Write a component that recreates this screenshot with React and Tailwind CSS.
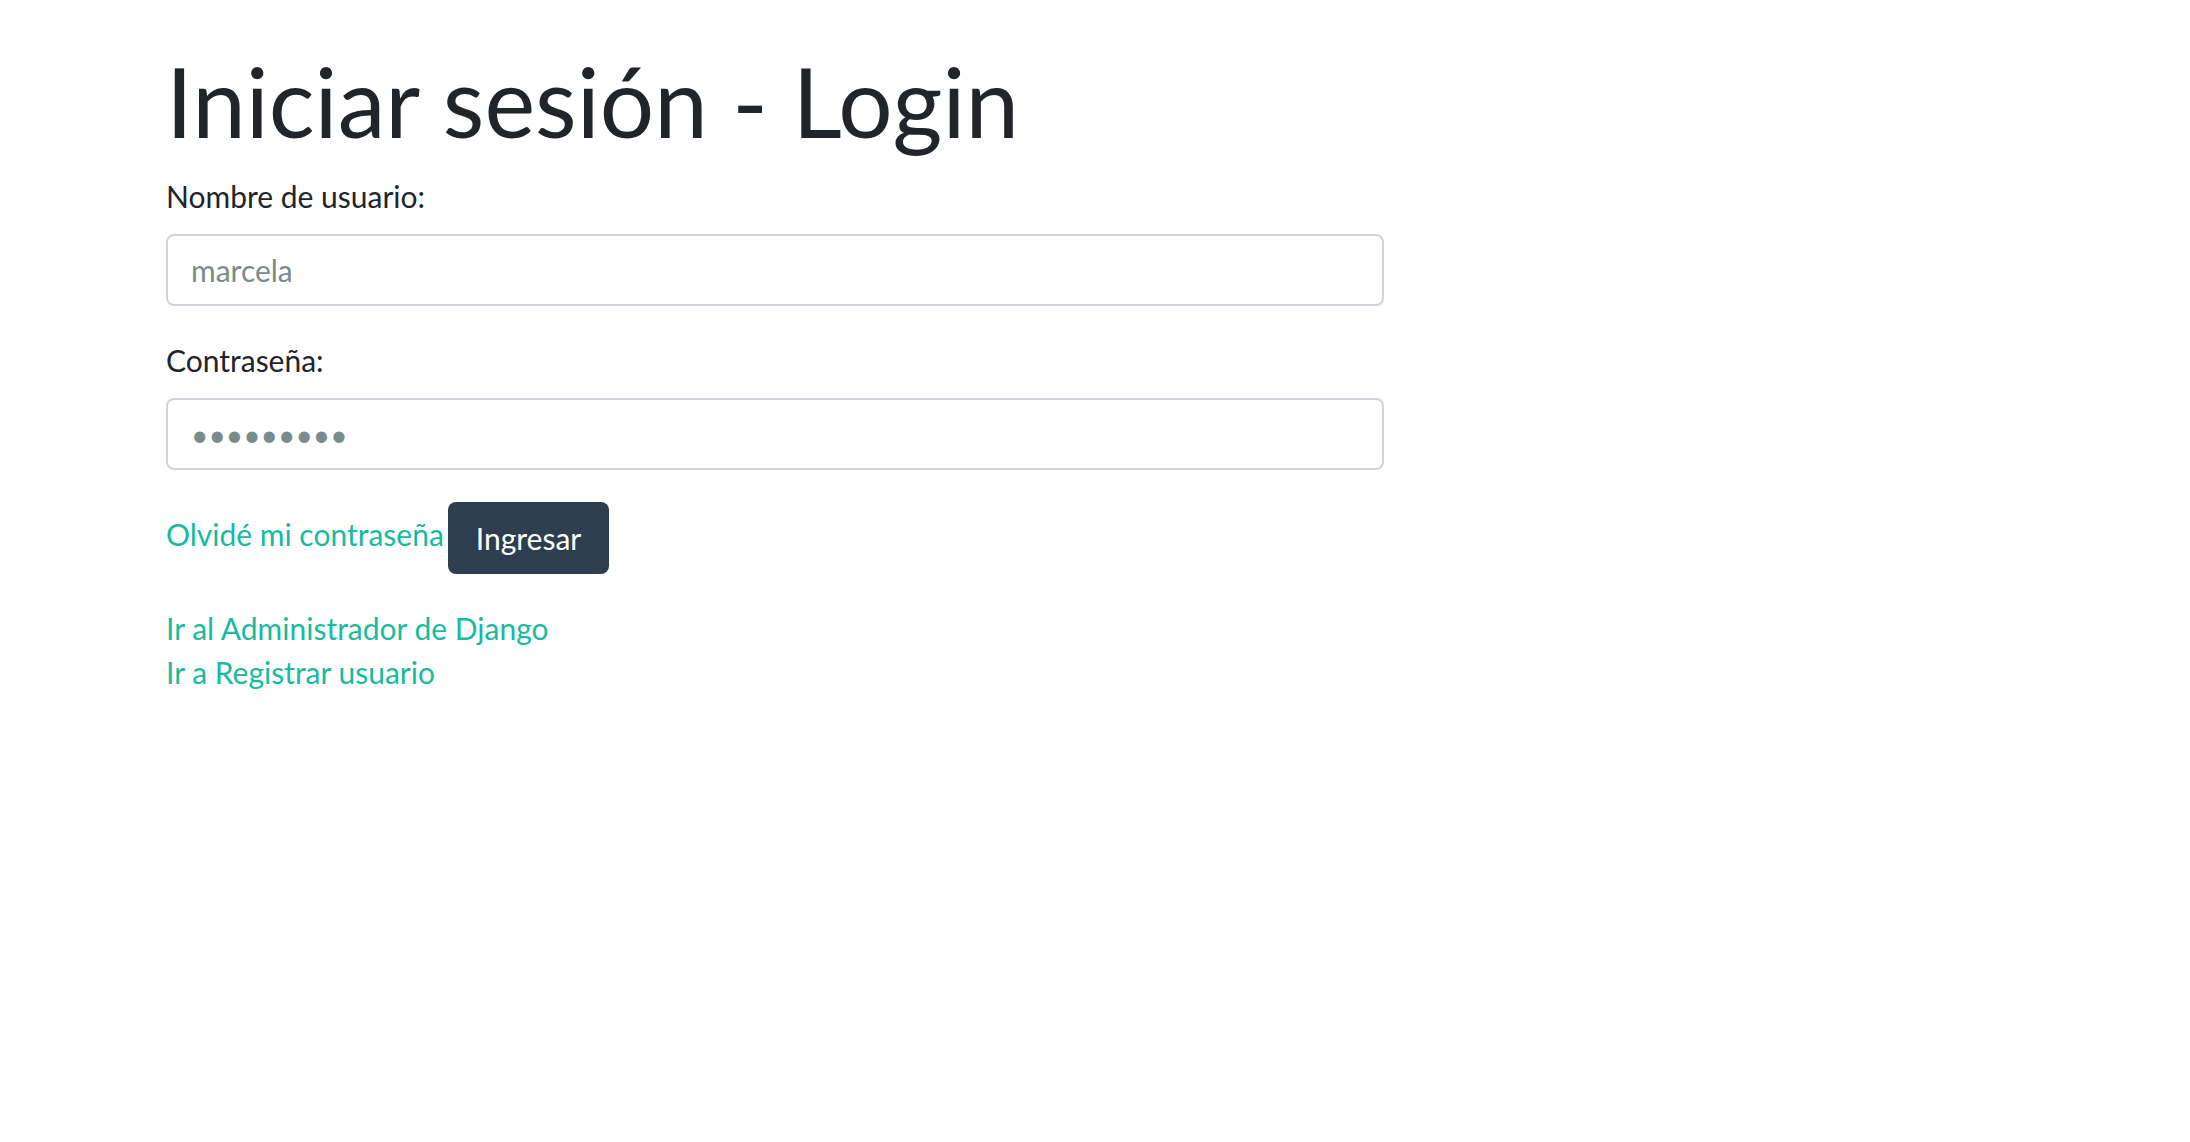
const fieldClass =
  'block h-[72px] w-full rounded-lg border-2 border-[#ced4da] bg-white px-[23px] text-[30px] leading-[44px] text-[#7b8a8b] placeholder:text-[#7b8a8b] placeholder:opacity-100';

function Field({ id, label, type, placeholder }) {
  return (
    <div className="mb-8">
      <label htmlFor={id} className="mb-4 block">
        {label}
      </label>
      <input id={id} name={id} type={type} placeholder={placeholder} className={fieldClass} />
    </div>
  );
}

export default function App() {
  return (
    <main className="min-h-screen bg-white font-['Lato',sans-serif] text-[30px] leading-[44px] text-[#212529]">
      <div className="mx-auto grid max-w-[1920px] grid-cols-3 gap-x-[62px] px-[31px] pt-[43px]">
        <div className="col-span-2">
          <h1 className="mb-4 text-[96px] leading-[115px]">Iniciar sesión - Login</h1>
          <form onSubmit={(event) => event.preventDefault()}>
            <Field id="username" label="Nombre de usuario:" type="text" placeholder="marcela" />
            <Field id="password" label="Contraseña:" type="password" placeholder="•••••••••" />
            <div className="mb-8 flex items-start gap-1">
              <a href="#recuperar" className="mt-[10px] text-[#18bc9c]">
                Olvidé mi contraseña
              </a>
              <button type="submit" className="h-[72px] rounded-lg bg-[#2c3e50] px-7 text-white">
                Ingresar
              </button>
            </div>
          </form>
          <nav className="flex flex-col items-start text-[#18bc9c]">
            <a href="#admin">Ir al Administrador de Django</a>
            <a href="#registrar">Ir a Registrar usuario</a>
          </nav>
        </div>
      </div>
    </main>
  );
}
